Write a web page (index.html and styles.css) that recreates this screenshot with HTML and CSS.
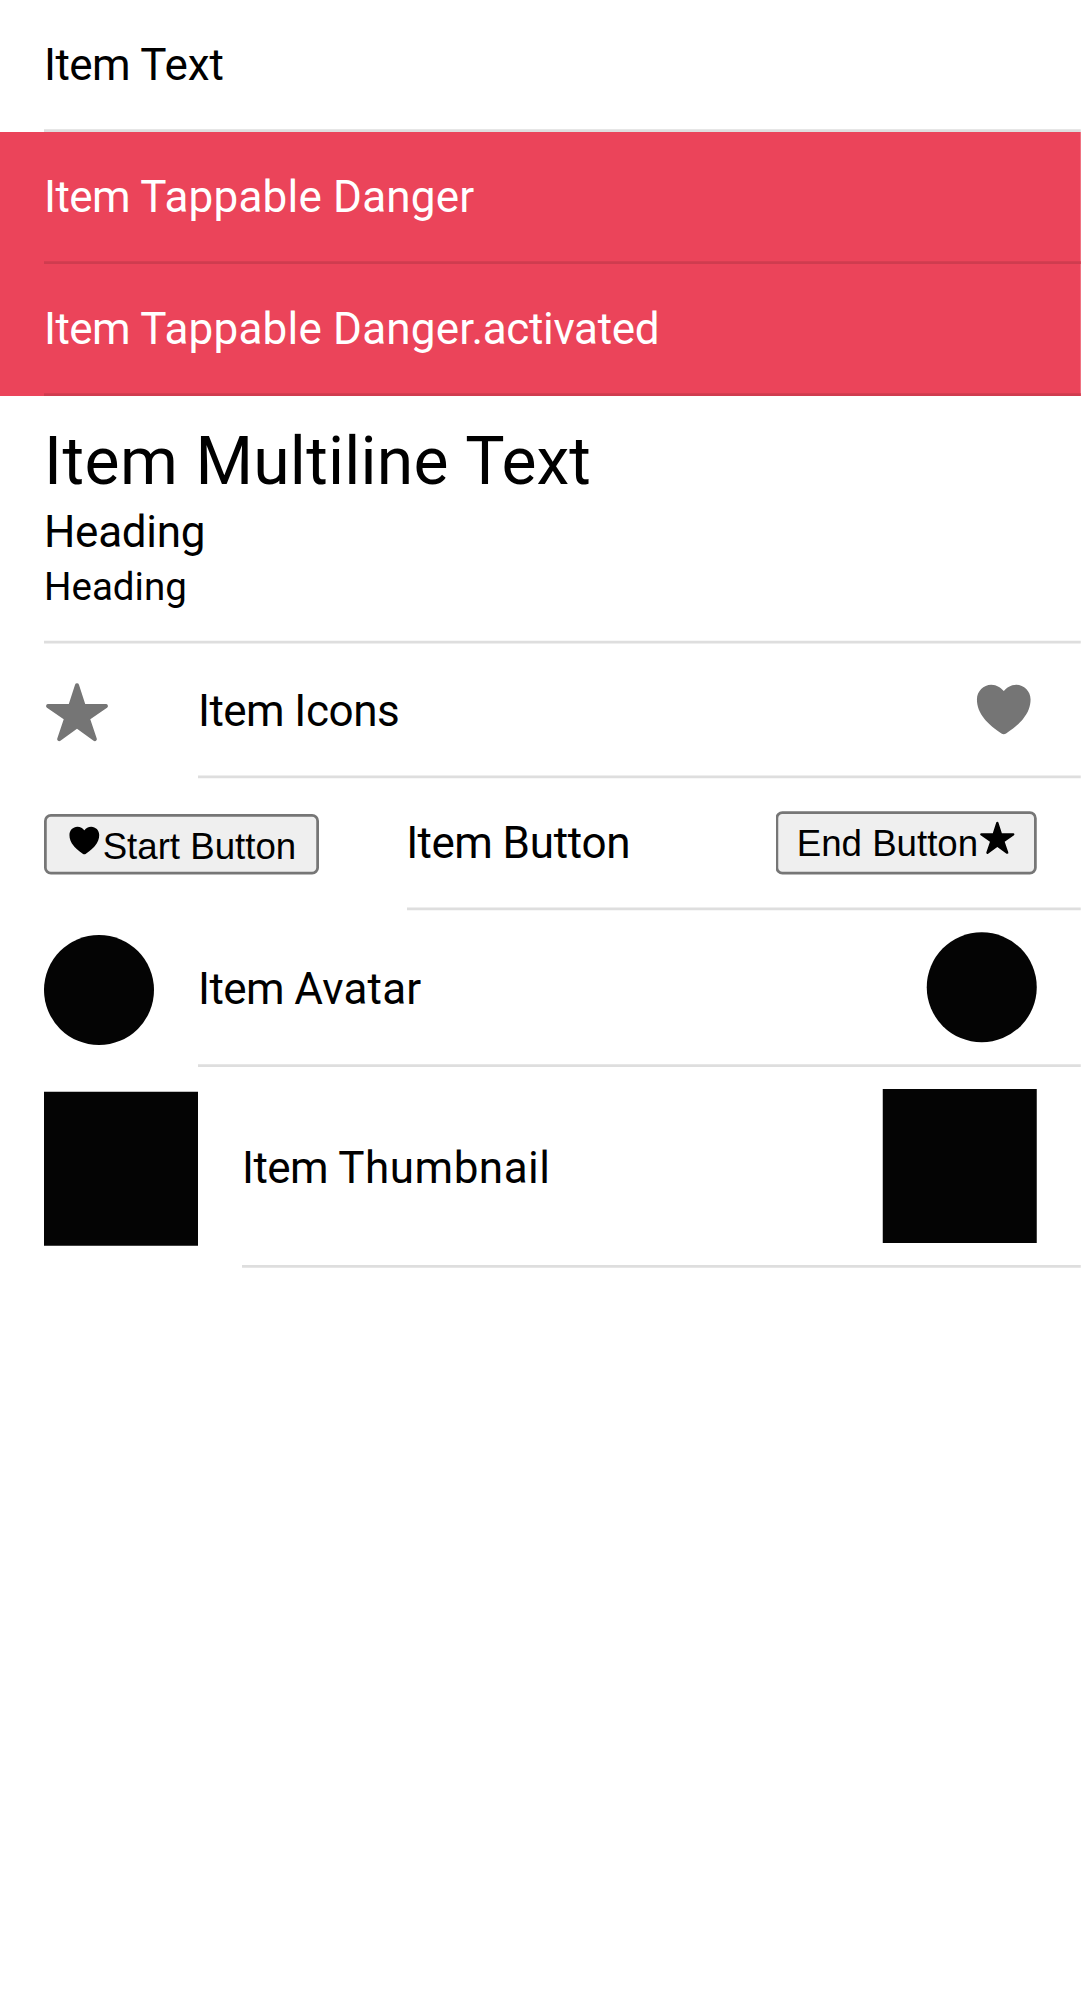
FILE: index.html
```html
<!DOCTYPE html>
<html lang="en">
<head>
<meta charset="utf-8">
<title>Items</title>
<link rel="stylesheet" href="styles.css">
</head>
<body>
<svg class="symbols" aria-hidden="true">
  <symbol id="star" viewBox="0 0 512 512"><path d="M394 480a16 16 0 01-9.39-3L256 383.76 127.39 477a16 16 0 01-24.55-18.08L153 310.35 23 221.2a16 16 0 019-29.2h160.38l48.4-148.95a16 16 0 0130.44 0l48.4 149H480a16 16 0 019.05 29.2L359 310.35l50.13 148.53A16 16 0 01394 480z"/></symbol>
  <symbol id="heart" viewBox="0 0 512 512"><path d="M256 448a32 32 0 01-18-5.57c-78.59-53.35-112.62-89.93-131.39-112.8-40-48.75-59.15-98.8-58.61-153C48.63 114.52 98.46 64 159.08 64c44.08 0 74.61 24.83 92.39 45.51a6 6 0 009.06 0C278.31 88.81 308.84 64 352.92 64c60.62 0 110.45 50.52 111.08 112.64.54 54.21-18.63 104.26-58.61 153-18.77 22.87-52.8 59.45-131.39 112.8A32 32 0 01256 448z"/></symbol>
</svg>
<main class="list">
  <div class="item"><div class="inner"><span class="label"><span class="lead">Item </span>Text</span></div></div>
  <div class="item danger"><div class="inner"><span class="label"><span class="lead">Item </span><span class="loose">Tappable Danger</span></span></div></div>
  <div class="item danger"><div class="inner"><span class="label"><span class="lead">Item </span><span class="loose">Tappable Danger</span><span class="suffix">.activated</span></span></div></div>
  <div class="item multiline"><div class="inner">
    <div class="headings"><h1><span class="lead">Item </span><span class="loose">Multiline </span>Text</h1><h2 class="tight">Heading</h2><h3>Heading</h3></div>
  </div></div>
  <div class="item icons">
    <svg class="icon start"><use href="#star"/></svg>
    <div class="inner"><span class="label"><span class="lead">Item </span><span class="tight">Icons</span></span><svg class="icon end"><use href="#heart"/></svg></div>
  </div>
  <div class="item buttons">
    <button class="button start"><svg class="glyph"><use href="#heart"/></svg>Start Button</button>
    <div class="inner"><span class="label"><span class="lead">Item </span><span class="tight">Button</span></span><button class="button end">End Button<svg class="glyph"><use href="#star"/></svg></button></div>
  </div>
  <div class="item avatars">
    <div class="avatar start"></div>
    <div class="inner"><span class="label"><span class="lead">Item </span><span class="loose">Avatar</span></span><div class="avatar end"></div></div>
  </div>
  <div class="item thumbnails">
    <div class="thumbnail start"></div>
    <div class="inner"><span class="label"><span class="lead">Item </span><span class="looser">Thumbnail</span></span><div class="thumbnail end"></div></div>
  </div>
</main>
</body>
</html>
```
FILE: styles.css
```css
* { box-sizing: border-box; }
body {
  margin: 0;
  min-height: 1999px;
  background: #fff;
  color: #000;
  font-family: Roboto, sans-serif;
  font-size: 16px;
}
.symbols { display: none; }

/* Phone-sized list (393 CSS px wide) enlarged to its 2.75x density. */
.list {
  width: 393px;
  transform: scale(2.75);
  transform-origin: 0 0;
}
.item {
  display: flex;
  align-items: flex-start;
  height: 48px;
  padding-left: 16px;
}
.inner {
  display: flex;
  flex: 1;
  align-self: stretch;
  justify-content: space-between;
  align-items: flex-start;
  padding-right: 16px;
  border-bottom: 1px solid #dedede;
}
.label {
  padding-top: 14px;
  line-height: 19px;
  white-space: nowrap;
}

/* Letter fitting */
.lead { letter-spacing: -.21px; }
.tight { letter-spacing: -.1px; }
.loose { letter-spacing: .08px; }
.looser { letter-spacing: .18px; }
.suffix { margin-left: -1.1px; letter-spacing: -.12px; }
.icons .tight { letter-spacing: -.15px; }
h1 .lead { letter-spacing: .19px; }
h1 .loose { letter-spacing: .08px; }

.danger { background: #eb445a; color: #fff; }
.danger .inner { border-color: #cf3c4f; }

.multiline { height: 90px; }
.headings { padding-top: 10px; }
h1, h2, h3 { margin: 0 0 2px; font-weight: 400; }
h1 { font-size: 24px; line-height: 28px; }
h2 { font-size: 16px; line-height: 19px; }
h3 { font-size: 14px; line-height: 16px; }

.icons { height: 49px; }
.icons .label { padding-top: 15px; }
.icon { flex: none; width: 24px; height: 24px; fill: #757575; }
.icon.start { margin: 13px 32px 0 0; }
.icon.end { margin-top: 12px; }

.button {
  flex: none;
  font-family: "Liberation Sans", sans-serif;
  white-space: nowrap;
}
.button.start { margin: 13px 32px 0 0; }
.button.end { margin: 12px 0 0; padding-bottom: 2px; }
.glyph { display: inline-block; width: 1em; height: 1em; }

.avatars { height: 57px; }
.avatars .label { padding-top: 19px; }
.avatar { width: 40px; height: 40px; border-radius: 50%; background: #040404; }
.avatar.start { margin: 9px 16px 0 0; }
.avatar.end { margin-top: 8px; }

.thumbnails { height: 73px; }
.thumbnails .label { padding-top: 27px; }
.thumbnail { width: 56px; height: 56px; background: #040404; }
.thumbnail.start { margin: 9px 16px 0 0; }
.thumbnail.end { margin-top: 8px; }
```
